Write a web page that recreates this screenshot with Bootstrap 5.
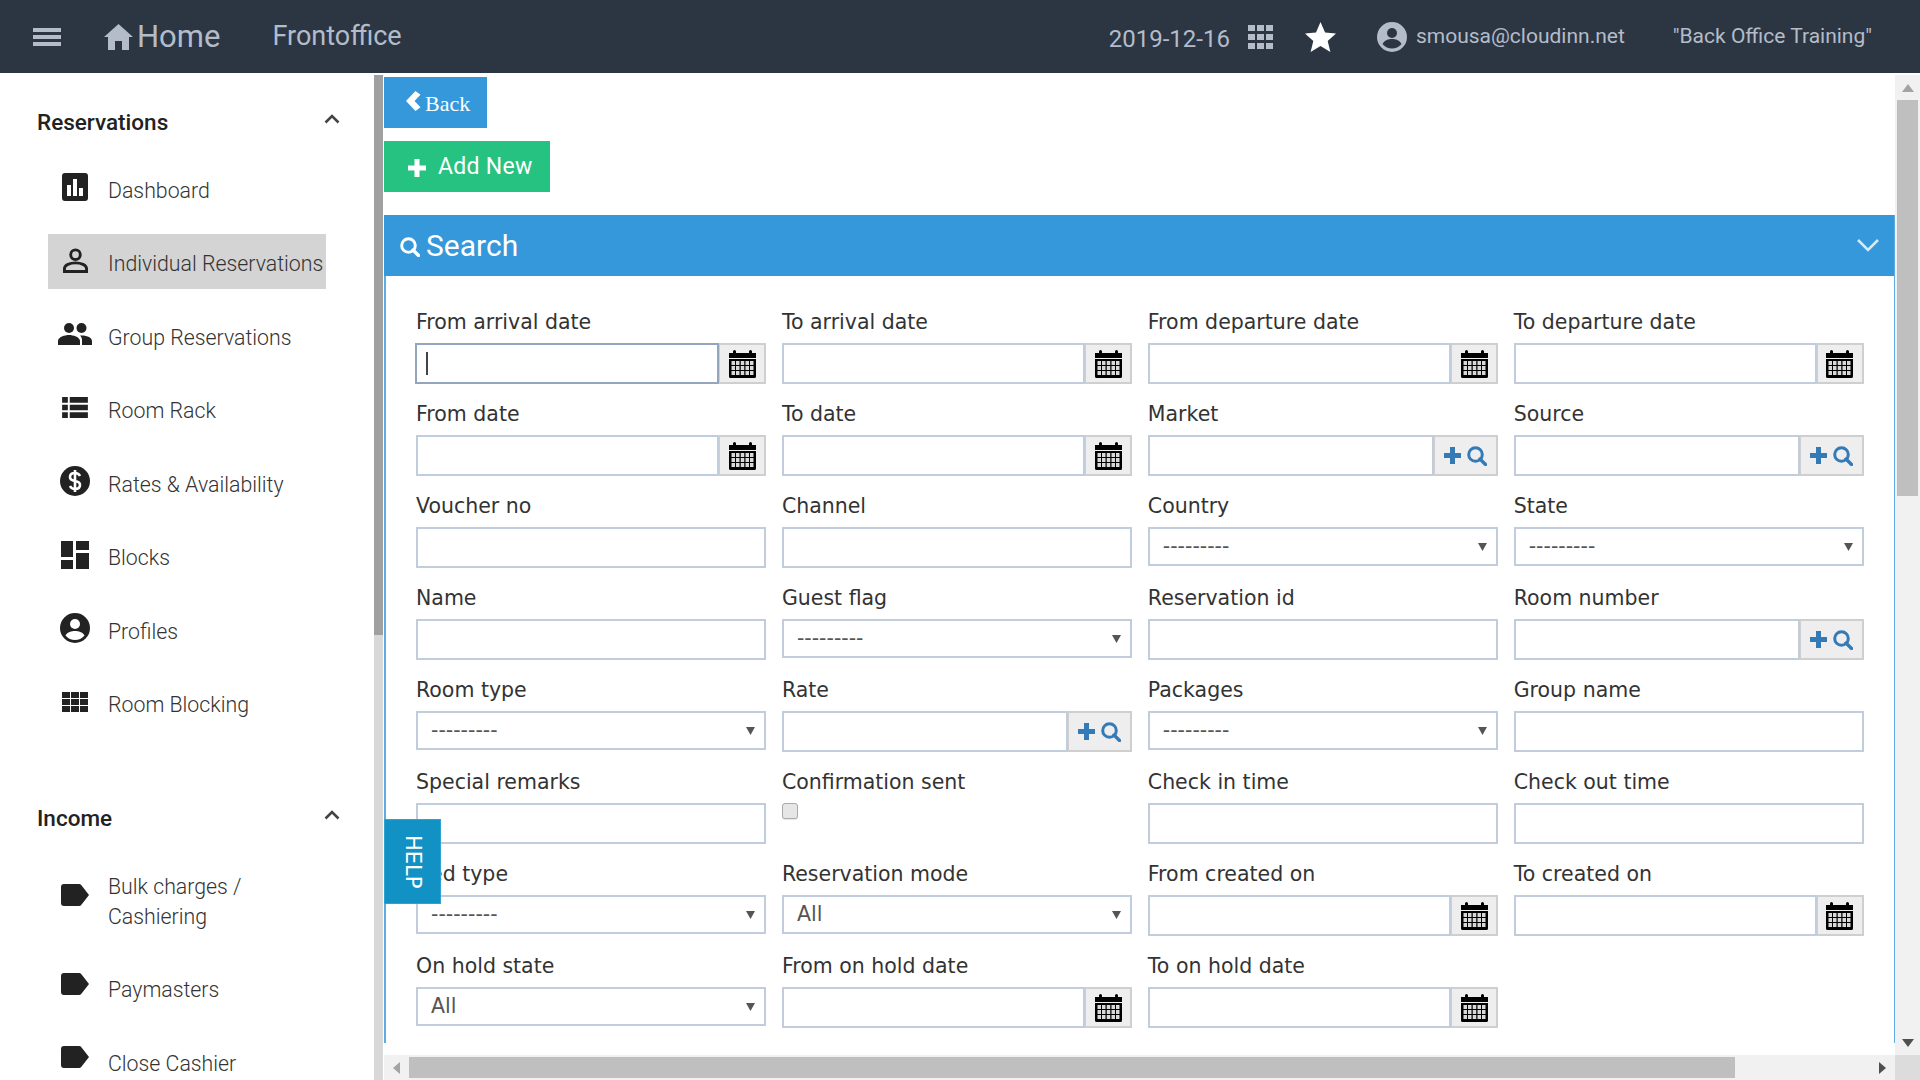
<!DOCTYPE html>
<html lang="en">
<head>
    <meta charset="UTF-8">
    <title>Frontoffice</title>
    <link href="https://cdn.jsdelivr.net/npm/bootstrap@5.3.3/dist/css/bootstrap.min.css" rel="stylesheet">
    <script src="https://cdn.jsdelivr.net/npm/bootstrap@5.3.3/dist/js/bootstrap.bundle.min.js"></script>
    <style>
        html, body { height: 100%; overflow: hidden; background: #fff; }
        body { font-family: Roboto, sans-serif; }
        .topbar { height: 73px; background: #2c3643; color: #b4bcc9; padding-left: 33px; }
        .burger { width: 28px; height: 18px; display: flex; flex-direction: column; justify-content: space-between; margin-right: 43px; }
        .burger span { display: block; height: 4px; background: #b4bcc9; }
        .top-home { font-size: 31px; line-height: 1; margin-left: 4px; margin-right: 52px; }
        .top-front { font-size: 27px; line-height: 1; }
        .top-date { font-size: 24px; margin-right: 18px; padding-top: 4px; }
        .top-mail { font-size: 21px; margin-left: 9px; margin-right: 48px; }
        .top-hotel { font-size: 21px; margin-right: 48px; }
        .shell { height: calc(100vh - 75px); margin-top: 2px; }
        .side-wrap { width: 384px; flex: none; }
        .side-menu { width: 374px; height: 100%; overflow: hidden; padding: 27px 48px 0 37px; flex: none; }
        .side-track { width: 9px; height: 100%; background: #d8d8d8; }
        .side-thumb { height: 560px; background: #a0a0a0; }
        .side-head { height: 41px; font-size: 22.5px; font-weight: 500; color: #222; }
        .side-head svg { margin-right: -14px; margin-top: -7px; }
        .side-list { margin: 17px 0 0 11px; padding: 0; list-style: none; }
        .side-item { min-height: 55px; padding: 15.5px 0 9.5px; margin-bottom: 18.5px; font-size: 21.3px; line-height: 30px; color: #333; font-weight: 300; white-space: nowrap; }
        .side-item.on { background: #d4d4d4; }
        .side-ico { width: 54px; flex: none; margin-right: 6px; margin-top: -7px; display: flex; justify-content: center; align-self: center; }
        .side-ico.is-tag { margin-top: -13px; }
        .side-gap { height: 50px; }
        .main-wrap { min-width: 0; }
        .main-view { min-height: 0; overflow: hidden; background: #fff; }
        .btn-back { width: 103px; height: 51px; margin-top: 2px; background: #3498db; color: #fff; font-family: "Liberation Serif", serif; font-size: 22px; border-radius: 0; border: 0; padding: 2px 0 0 22px; }
        .btn-back svg { margin-top: -6px; }
        .btn-add { width: 166px; height: 51px; margin-top: 13px; background: #26c281; color: #fff; font-size: 23px; border-radius: 0; border: 0; padding: 2px 0 0 24px; letter-spacing: .3px; }
        .search-panel { margin-top: 23px; border-left: 2px solid #5dade2; border-right: 1px solid #5dade2; }
        .search-head { height: 61px; background: #3498db; color: #fff; font-size: 30px; margin-left: -2px; padding: 0 15px 0 16px; }
        .search-head .ic-lead { margin-right: 6px; margin-top: 3px; }
        .search-body { padding: 31px 30px 0 30px; }
        .search-row { --bs-gutter-x: 15.67px; }
        .fld { height: 92px; font-family: "DejaVu Sans", sans-serif; }
        .fld label { display: block; font-size: 20.5px; line-height: 30px; color: #333; margin: 0 0 6px; white-space: nowrap; }
        .fld .form-control, .fld .form-select { height: 41px; border: 2px solid #c1ccdc; border-radius: 0; padding: 0 13px; font-size: 20.5px; color: #555; box-shadow: none; background-color: #fff; }
        .fld .form-select { height: 39px; background-image: url("data:image/svg+xml,%3Csvg xmlns='http://www.w3.org/2000/svg' viewBox='0 0 9 8'%3E%3Cpath fill='%23555' d='M0 0h9L4.500 8z'/%3E%3C/svg%3E"); background-size: 9px 8px; background-position: right 9px center; }
        .fld .form-control.is-caret { border-color: #94a5c2; }
        .fld .add-on { height: 41px; border: 2px solid #cfcfcf; border-left-width: 2px; border-radius: 0; background: #eee; padding: 0; justify-content: center; }
        .add-cal { width: 48px; }
        .add-find { width: 65px; gap: 6px; }
        .caret-mark { position: absolute; left: 10px; top: 9px; width: 2px; height: 23px; background: #444; z-index: 6; }
        .tick { display: block; width: 16px; height: 16px; margin-top: 6px; background: #e6e6e6; border: 1px solid #aaa; border-radius: 3px; box-shadow: 0 1px 1px rgba(0,0,0,.1); }
        .help-tab { position: absolute; left: 0; top: 744px; width: 57px; height: 85px; background: #1291c4; border: 1px solid #2ea3d2; color: #fff; font-family: "DejaVu Sans", sans-serif; font-size: 21px; writing-mode: vertical-rl; text-align: center; line-height: 55px; z-index: 10; }
        .v-bar { width: 25px; flex: none; background: #f1f1f1; }
        .v-thumb { width: 21px; height: 396px; margin: 0 auto; background: #bfbfbf; }
        .bar-btn { height: 25px; flex: none; }
        .h-bar { height: 25px; flex: none; background: #f1f1f1; }
        .h-btn { width: 25px; flex: none; }
        .h-thumb { width: 1326px; height: 21px; background: #bfbfbf; }
        .bar-corner { width: 25px; background: #dcdcdc; }
    </style>
</head>
<body>

<!-- icons used more than once -->
<svg width="0" height="0" class="position-absolute">
    <symbol id="ic-cal" viewBox="0 0 27 28">
        <path fill="#000" d="M0 3h4V1.500a1.500 1.500 0 0 1 3 0V3h13V1.500a1.500 1.500 0 0 1 3 0V3h4v5H0zM0 9h27v17.500a1.500 1.500 0 0 1-1.500 1.500h-24A1.500 1.500 0 0 1 0 26.500z"/>
        <path fill="#d8d8d8" d="M2.500 11h3.500v4H2.500zM7 11h3.500v4H7zM11.750 11h3.500v4h-3.500zM16.500 11h3.500v4h-3.500zM21 11h3.500v4H21zM2.500 16h3.500v4H2.500zM7 16h3.500v4H7zM11.750 16h3.500v4h-3.500zM16.500 16h3.500v4h-3.500zM21 16h3.500v4H21zM2.500 21h3.500v4H2.500zM7 21h3.500v4H7zM11.750 21h3.500v4h-3.500zM16.500 21h3.500v4h-3.500zM21 21h3.500v4H21z"/>
    </symbol>
    <symbol id="ic-plus" viewBox="0 0 17 17"><path fill="#337ab7" d="M6 0h5v6h6v5h-6v6H6v-6H0V6h6z"/></symbol>
    <symbol id="ic-find" viewBox="0 0 20 20"><circle cx="8.500" cy="8.500" r="6.800" fill="none" stroke="currentColor" stroke-width="3"/><path d="M13 13l5.500 5.500" stroke="currentColor" stroke-width="3.400" stroke-linecap="round"/></symbol>
    <symbol id="ic-tag" viewBox="0 0 28 22"><path fill="#222" d="M3 0h15a3 3 0 0 1 2.400 1.300L28 11l-7.600 9.700A3 3 0 0 1 18 22H3a3 3 0 0 1-3-3V3a3 3 0 0 1 3-3z"/></symbol>
    <symbol id="ic-up" viewBox="0 0 16 10"><path d="M1.500 8.500L8 2l6.500 6.500" fill="none" stroke="#444" stroke-width="2.600"/></symbol>
</svg>

<nav class="topbar d-flex align-items-center">
    <div class="burger"><span></span><span></span><span></span></div>
    <svg width="29" height="26" viewBox="0 0 29 26"><path fill="#b4bcc9" d="M14.500 0L29 13h-4v13h-7v-9h-7v9H4V13H0z"/></svg>
    <span class="top-home">Home</span>
    <span class="top-front">Frontoffice</span>
    <div class="ms-auto d-flex align-items-center">
        <span class="top-date">2019-12-16</span>
        <svg width="25" height="24" viewBox="0 0 25 24" class="me-4"><path fill="#b4bcc9" d="M0 0h7v6H0zM9 0h7v6H9zM18 0h7v6h-7zM0 9h7v6H0zM9 9h7v6H9zM18 9h7v6h-7zM0 18h7v6H0zM9 18h7v6H9zM18 18h7v6h-7z"/></svg>
        <svg width="31" height="30" viewBox="0 0 31 30" class="ms-2"><path fill="#fff" d="M15.500 0l4.600 10.600 11 .9-8.400 7.400 2.700 11.100-9.900-6.100-9.900 6.100 2.700-11.100L0 11.500l11-.9z"/></svg>
        <svg width="30" height="30" viewBox="0 0 30 30" style="margin-left:41px"><circle cx="15" cy="15" r="15" fill="#b4bcc9"/><circle cx="15" cy="11" r="5" fill="#2c3643"/><path fill="#2c3643" d="M5.500 22c2-4 6-5 9.500-5s7.500 1 9.500 5c-2.500 3-6 4.500-9.500 4.500S8 25 5.500 22z"/></svg>
        <span class="top-mail">smousa@cloudinn.net</span>
        <span class="top-hotel">"Back Office Training"</span>
    </div>
</nav>

<div class="shell d-flex">
    <aside class="side-wrap d-flex">
        <div class="side-menu">
            <div class="side-head d-flex justify-content-between align-items-center">Reservations <svg width="16" height="10"><use href="#ic-up"/></svg></div>
            <ul class="side-list">
                <li class="side-item d-flex"><span class="side-ico"><svg width="26" height="28" viewBox="0 0 26 28"><rect width="26" height="28" rx="3" fill="#222"/><path fill="#fff" d="M5 12h4v11H5zM11 6h4v17h-4zM17 15h4v8h-4z"/></svg></span>Dashboard</li>
                <li class="side-item on d-flex"><span class="side-ico"><svg width="25" height="25" viewBox="0 0 26 26"><circle cx="13" cy="7" r="5" fill="none" stroke="#222" stroke-width="3"/><path d="M1.500 24.500v-3c0-4 6-6 11.500-6s11.500 2 11.500 6v3z" fill="none" stroke="#222" stroke-width="3"/></svg></span>Individual Reservations</li>
                <li class="side-item d-flex"><span class="side-ico"><svg width="34" height="22" viewBox="0 0 34 22"><circle cx="11" cy="5" r="5" fill="#222"/><circle cx="23.500" cy="5" r="5" fill="#222"/><path fill="#222" d="M0 22v-4c0-4 7-6 11-6s11 2 11 6v4zM24 22v-5c0-2-1-3.500-2-4.500 4-.5 12 1 12 5.500v4z"/></svg></span>Group Reservations</li>
                <li class="side-item d-flex"><span class="side-ico"><svg width="26" height="21" viewBox="0 0 27 22"><path fill="#222" d="M0 0h6v6H0zM8 0h19v6H8zM0 8h6v6H0zM8 8h19v6H8zM0 16h6v6H0zM8 16h19v6H8z"/></svg></span>Room Rack</li>
                <li class="side-item d-flex"><span class="side-ico"><svg width="30" height="30" viewBox="0 0 30 30"><circle cx="15" cy="15" r="15" fill="#222"/><path d="M20 10c-1-2-3-3-5-3-3 0-5 1.500-5 4s2 3.500 5 4 5 1.500 5 4-2 4-5 4c-2 0-4-1-5-3M15 4v22" fill="none" stroke="#fff" stroke-width="2.600"/></svg></span>Rates &amp; Availability</li>
                <li class="side-item d-flex"><span class="side-ico"><svg width="28" height="28" viewBox="0 0 28 28"><path fill="#222" d="M0 0h12v16H0zM15 0h13v9H15zM0 19h12v9H0zM15 12h13v16H15z"/></svg></span>Blocks</li>
                <li class="side-item d-flex"><span class="side-ico"><svg width="30" height="30" viewBox="0 0 30 30"><circle cx="15" cy="15" r="15" fill="#222"/><circle cx="15" cy="11" r="5" fill="#fff"/><path fill="#fff" d="M5.500 22.500c2-3.500 6-4.500 9.500-4.500s7.500 1 9.500 4.500c-2.500 3-6 4.500-9.500 4.500s-7-1.500-9.500-4.500z"/></svg></span>Profiles</li>
                <li class="side-item d-flex"><span class="side-ico"><svg width="26" height="20" viewBox="0 0 26 20"><path fill="#222" d="M0 0h8v6H0zM9 0h8v6H9zM18 0h8v6h-8zM0 7h8v6H0zM9 7h8v6H9zM18 7h8v6h-8zM0 14h8v6H0zM9 14h8v6H9zM18 14h8v6h-8z"/></svg></span>Room Blocking</li>
            </ul>
            <div class="side-gap"></div>
            <div class="side-head d-flex justify-content-between align-items-center">Income <svg width="16" height="10"><use href="#ic-up"/></svg></div>
            <ul class="side-list">
                <li class="side-item d-flex"><span class="side-ico is-tag"><svg width="28" height="22"><use href="#ic-tag"/></svg></span><span>Bulk charges /<br>Cashiering</span></li>
                <li class="side-item d-flex"><span class="side-ico is-tag"><svg width="28" height="22"><use href="#ic-tag"/></svg></span>Paymasters</li>
                <li class="side-item d-flex"><span class="side-ico is-tag"><svg width="28" height="22"><use href="#ic-tag"/></svg></span>Close Cashier</li>
            </ul>
        </div>
        <div class="side-track"><div class="side-thumb"></div></div>
    </aside>

    <div class="main-wrap flex-grow-1 d-flex flex-column position-relative">
        <div class="d-flex flex-grow-1" style="min-height:0">
            <main class="main-view flex-grow-1">
                <button type="button" class="btn btn-back d-flex align-items-center gap-1">
                    <svg width="15" height="20" viewBox="0 0 15 20"><path d="M9.500 0L14.500 3.800 8.500 10l6 6.200L9.500 20 0 10z" fill="#fff"/></svg>Back
                </button>
                <button type="button" class="btn btn-add d-flex align-items-center">
                    <svg width="18" height="18" viewBox="0 0 18 18" class="me-2"><path fill="#fff" d="M6.500 0h5v6.500H18v5h-6.500V18h-5v-6.500H0v-5h6.500z"/></svg><span class="ms-1">Add New</span>
                </button>
                <section class="search-panel">
                    <div class="search-head d-flex align-items-center">
                        <svg width="20" height="20" class="ic-lead" style="color:#fff"><use href="#ic-find"/></svg>
                        <span>Search</span>
                        <svg width="22" height="13" viewBox="0 0 22 13" class="ms-auto"><path d="M1 1l10 10L21 1" fill="none" stroke="#d6eaf8" stroke-width="2.600"/></svg>
                    </div>
                    <div class="search-body">
                        <div class="row search-row" id="searchFields"></div>
                    </div>
                </section>
            </main>
            <div class="v-bar d-flex flex-column">
                <div class="bar-btn d-flex align-items-center justify-content-center"><svg width="12" height="8"><path d="M0 8L6 0l6 8z" fill="#a3a3a3"/></svg></div>
                <div class="v-thumb"></div>
                <div class="flex-grow-1"></div>
                <div class="bar-btn d-flex align-items-center justify-content-center"><svg width="12" height="8"><path d="M0 0l6 8 6-8z" fill="#505050"/></svg></div>
            </div>
        </div>
        <div class="h-bar d-flex">
            <div class="flex-grow-1 d-flex align-items-center">
                <div class="h-btn d-flex justify-content-center"><svg width="7" height="12"><path d="M7 0L0 6l7 6z" fill="#a3a3a3"/></svg></div>
                <div class="h-thumb"></div>
                <div class="ms-auto h-btn d-flex justify-content-center"><svg width="7" height="12"><path d="M0 0l7 6-7 6z" fill="#505050"/></svg></div>
            </div>
            <div class="bar-corner"></div>
        </div>
        <a class="help-tab text-decoration-none">HELP</a>
    </div>
</div>

<script>
    // t: text, date, find (text + add/search), select, check
    const fields = [
        ["From arrival date","date"],["To arrival date","date"],["From departure date","date"],["To departure date","date"],
        ["From date","date"],["To date","date"],["Market","find"],["Source","find"],
        ["Voucher no","text"],["Channel","text"],["Country","select"],["State","select"],
        ["Name","text"],["Guest flag","select"],["Reservation id","text"],["Room number","find"],
        ["Room type","select"],["Rate","find"],["Packages","select"],["Group name","text"],
        ["Special remarks","text"],["Confirmation sent","check"],["Check in time","text"],["Check out time","text"],
        ["Bed type","select"],["Reservation mode","all"],["From created on","date"],["To created on","date"],
        ["On hold state","all"],["From on hold date","date"],["To on hold date","date"]
    ];

    function fieldControl(kind, first){
        if(kind === "select" || kind === "all"){
            const txt = kind === "all" ? "All" : "---------";
            return `<select class="form-select"><option>${txt}</option></select>`;
        }
        if(kind === "check"){
            return `<span class="tick"></span>`;
        }
        if(kind === "date"){
            return `<div class="input-group">${first ? '<span class="caret-mark"></span>' : ''}<input type="text" class="form-control${first ? ' is-caret' : ''}"><span class="input-group-text add-on add-cal"><svg width="27" height="28"><use href="#ic-cal"/></svg></span></div>`;
        }
        if(kind === "find"){
            return `<div class="input-group"><input type="text" class="form-control"><span class="input-group-text add-on add-find"><svg width="17" height="17"><use href="#ic-plus"/></svg><svg width="20" height="20" style="color:#337ab7"><use href="#ic-find"/></svg></span></div>`;
        }
        return `<input type="text" class="form-control">`;
    }

    const holder = document.getElementById("searchFields");
    fields.forEach((f, i) => {
        const col = document.createElement("div");
        col.className = "col-3 fld";
        col.innerHTML = `<label>${f[0]}</label>${fieldControl(f[1], i === 0)}`;
        holder.appendChild(col);
    });
</script>
</body>
</html>
